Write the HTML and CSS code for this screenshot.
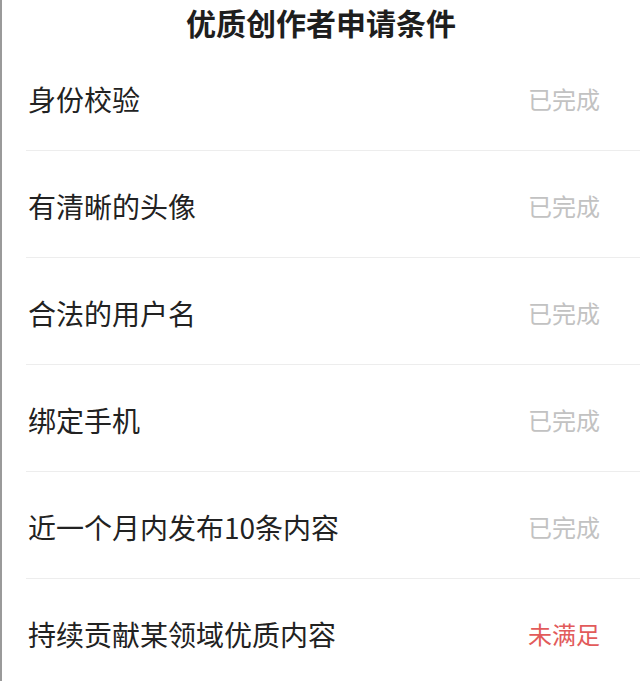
FILE: index.html
```html
<!DOCTYPE html>
<html lang="zh">
<head>
  <meta charset="UTF-8">
  <meta name="viewport" content="width=device-width, initial-scale=1.0">
  <title>优质创作者申请条件</title>
  <link rel="stylesheet" href="styles.css">
</head>
<body>

<div class="page">
  <h1 class="title">优质创作者申请条件</h1>

  <div class="list">
    <div class="row">
      <span class="label">身份校验</span>
      <span class="status">已完成</span>
    </div>
    <div class="row">
      <span class="label">有清晰的头像</span>
      <span class="status">已完成</span>
    </div>
    <div class="row">
      <span class="label">合法的用户名</span>
      <span class="status">已完成</span>
    </div>
    <div class="row">
      <span class="label">绑定手机</span>
      <span class="status">已完成</span>
    </div>
    <div class="row">
      <span class="label">近一个月内发布10条内容</span>
      <span class="status">已完成</span>
    </div>
    <div class="row">
      <span class="label">持续贡献某领域优质内容</span>
      <span class="status fail">未满足</span>
    </div>
  </div>
</div>

</body>
</html>
```

FILE: styles.css
```css
html, body {
  height: 100%;
}
body {
  margin: 0;
  font-family: "Noto Sans CJK SC", "Noto Sans", sans-serif;
  background-color: #fff;
  color: #222;
  overflow: hidden;
}
.page {
  height: 100%;
  border-left: 2px solid #9a9a9a;
  box-sizing: border-box;
}
.title {
  margin: 0;
  height: 44px;
  line-height: 44px;
  font-size: 30px;
  font-weight: bold;
  text-align: center;
  color: #1e1e1e;
}
.list {
  margin-left: 24px;
}
.row {
  display: flex;
  justify-content: space-between;
  align-items: center;
  height: 103px;
  padding: 3px 40px 0 2px;
  border-bottom: 1px solid #ededed;
}
.label {
  font-size: 28px;
  color: #222;
}
.status {
  font-size: 24px;
  color: #c2c2c2;
}
.status.fail {
  color: #e25b5b;
}
```
